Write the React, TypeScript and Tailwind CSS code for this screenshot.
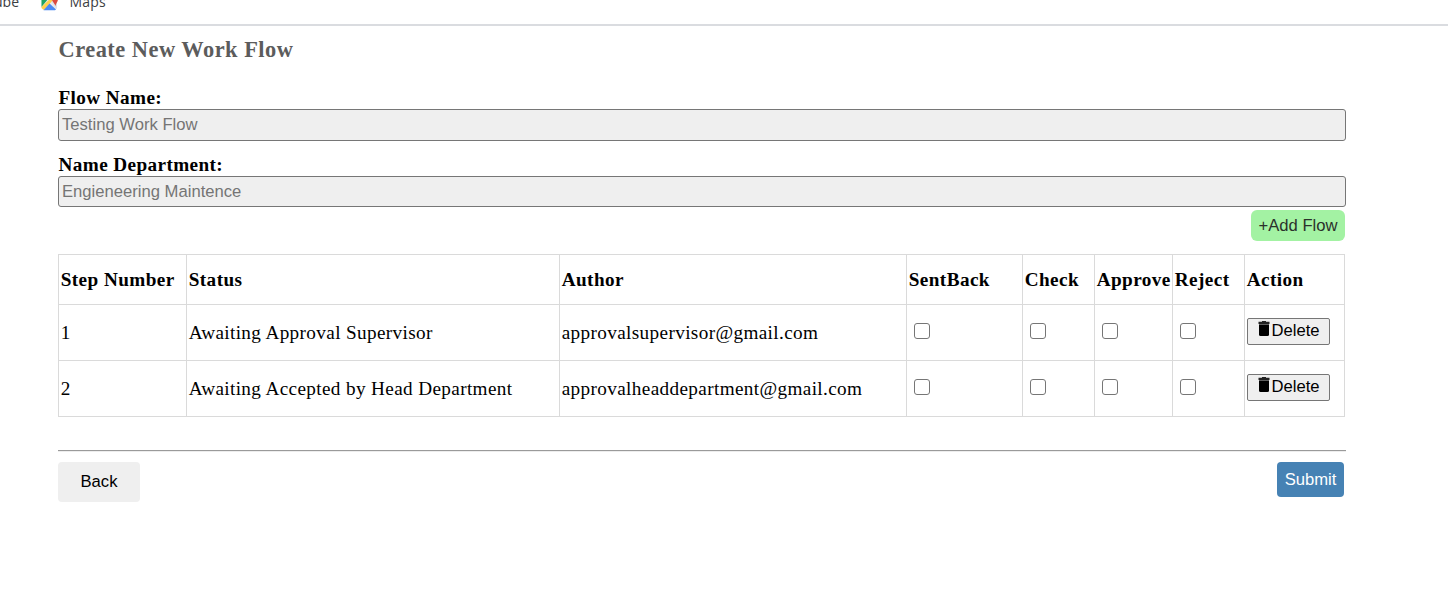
import React from "react";

const columns = [
  { label: "Step Number", width: "w-[128px]" },
  { label: "Status", width: "w-[373px]" },
  { label: "Author", width: "w-[347px]" },
  { label: "SentBack", width: "w-[116px]" },
  { label: "Check", width: "w-[72px]" },
  { label: "Approve", width: "w-[78px]" },
  { label: "Reject", width: "w-[72px]" },
  { label: "Action", width: "w-[100px]" },
];

const steps = [
  { id: 1, status: "Awaiting Approval Supervisor", author: "approvalsupervisor@gmail.com" },
  { id: 2, status: "Awaiting Accepted by Head Department", author: "approvalheaddepartment@gmail.com" },
];

const flags = ["SentBack", "Check", "Approve", "Reject"];

function MapsIcon() {
  return (
    <svg width="17" height="18" viewBox="0 0 17 18" className="shrink-0">
      <path d="M.5 0H16v14a3 3 0 0 1-3 3H3.500a3 3 0 0 1-3-3z" fill="#e8eaed" />
      <path d="M.5 0H12L.5 14z" fill="#1fa463" />
      <path d="M11 4l2 2L3 17l-2.500-2v-1z" fill="#ffd04b" />
      <path d="M8.500 10.500 15 16.500l-1 .8H2.500z" fill="#4a89f3" />
      <path d="M10.500 9 16 6v9l-1 1z" fill="#dfe2e6" />
      <path d="M11 6h6c0 3-2 4-2.500 7C13.500 10 11 9 11 6z" fill="#dd4b3e" />
    </svg>
  );
}

function TrashIcon() {
  return (
    <svg width="12" height="15" viewBox="0 0 12 15" className="shrink-0">
      <path d="M4 0h4v.7h3.500V3H.5V.7H4z" fill="#222" />
      <path d="M1 3h10v10.500a1.500 1.500 0 0 1-1.500 1.500h-7A1.500 1.500 0 0 1 1 13.500z" fill="#000" />
      <path d="M1 3h10v.8H1z" fill="#777" />
    </svg>
  );
}

function Field({ label, value, height }: { label: string; value: string; height: string }) {
  return (
    <div>
      <label className="block h-[22px] pl-[0.5px] text-[19.2px] leading-[22px] font-bold tracking-[0.4px] text-black">{label}</label>
      <div className={`rounded-[3px] border border-[#767676] bg-[#efefef] px-[3px] pt-[3px] font-['Liberation_Sans',sans-serif] text-[16.64px] leading-6 text-[#757575] ${height}`}>
        {value}
      </div>
    </div>
  );
}

export default function App() {
  return (
    <div className="h-[610px] overflow-hidden bg-white font-['Liberation_Serif',serif] text-black">
      <header className="flex h-[26px] items-start overflow-hidden border-b-2 border-[#dadce0] font-['Open_Sans',sans-serif] text-[14px] text-[#3c4043]">
        <div className="-mt-[7px] flex w-[19px] shrink-0 justify-end leading-[18px]">Tube</div>
        <div className="-mt-[7px] ml-[22px] flex">
          <MapsIcon />
          <span className="ml-[11.5px] leading-[18px] tracking-[0.2px]">Maps</span>
        </div>
      </header>

      <main className="ml-[58px] w-[1288px]">
        <h1 className="mt-[11px] h-[25px] pl-[0.5px] text-[22.4px] leading-[26px] font-bold tracking-[0.5px] text-[#5c5c5c]">
          Create New Work Flow
        </h1>
        <div className="mt-[25px] flex flex-col gap-[13px]">
          <Field label="Flow Name:" value="Testing Work Flow" height="h-8" />
          <Field label="Name Department:" value="Engieneering Maintence" height="h-[31px]" />
        </div>
        <div className="mt-[3px] flex justify-end pr-px font-['Liberation_Sans',sans-serif]">
          <button className="h-[31px] w-[94px] rounded-[6px] bg-[#a3f2a3] pt-px text-[16.64px] whitespace-nowrap text-[#2b302b]">
            +Add Flow
          </button>
        </div>

        <table className="mt-[13px] w-[1287px] table-fixed border-separate border-spacing-0 border-t border-l border-[#dadada] text-[19.2px] leading-[22px]">
          <thead>
            <tr className="h-[50px]">
              {columns.map((c) => (
                <th key={c.label} className={`border-r border-b border-[#dadada] py-0 pr-0 pl-[1.7px] text-left font-bold tracking-[0.43px] whitespace-nowrap ${c.width}`}>
                  {c.label}
                </th>
              ))}
            </tr>
          </thead>
          <tbody>
            {steps.map((s) => (
              <tr key={s.id} className="h-14 tracking-[0.37px]">
                <td className="border-r border-b border-[#dadada] py-0 pl-[1.7px]">{s.id}</td>
                <td className="border-r border-b border-[#dadada] py-0 pl-[1.7px]">{s.status}</td>
                <td className="border-r border-b border-[#dadada] py-0 pl-[1.7px]">{s.author}</td>
                {flags.map((f) => (
                  <td key={f} className="border-r border-b border-[#dadada] p-0 pb-[3px] pl-[7px]">
                    <input type="checkbox" aria-label={f} className="block size-4 appearance-none rounded-[3px] border border-[#767676] bg-white" />
                  </td>
                ))}
                <td className="border-r border-b border-[#dadada] p-0 pb-[2px] pl-[2px]">
                  <button className="flex h-[27px] w-[83px] rounded-[2px] border border-[#767676] bg-[#efefef] pt-[2px] pl-[10px] font-['Liberation_Sans',sans-serif] text-[16.64px] leading-5 tracking-normal">
                    <TrashIcon />
                    <span className="ml-[1.5px]">Delete</span>
                  </button>
                </td>
              </tr>
            ))}
          </tbody>
        </table>

        <hr className="mt-[33px] h-[2px] border-t border-b border-t-[#9a9a9a] border-b-[#ededed]" />
        <div className="mt-[10px] flex items-start justify-between pr-[2px] font-['Liberation_Sans',sans-serif] text-[16.64px]">
          <button className="h-10 w-[82px] rounded-[4px] bg-[#efefef] text-black">Back</button>
          <button className="h-[35px] w-[67px] rounded-[4px] bg-[#4682b4] pt-px text-white">Submit</button>
        </div>
      </main>
    </div>
  );
}
